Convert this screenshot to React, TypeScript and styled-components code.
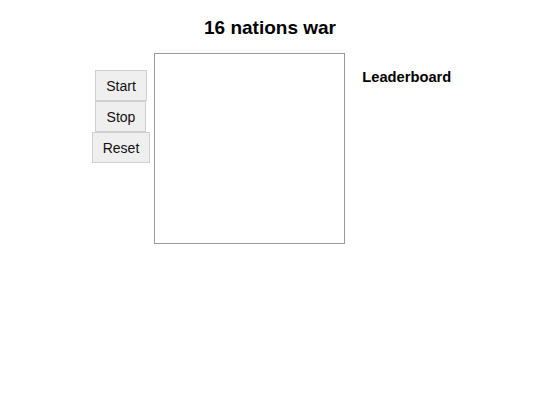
import React from "react";
import styled, { createGlobalStyle } from "styled-components";

const Global = createGlobalStyle`
  html, body { margin: 0; padding: 0; background: #ffffff; }
  body { font-family: "Liberation Sans", Arial, sans-serif; color: #000; }
`;

const Page = styled.div`
  display: flex;
  flex-direction: column;
  align-items: center;
`;

const Title = styled.h1`
  font-size: 19px;
  line-height: 23px;
  font-weight: bold;
  margin: 16px 0 14px;
`;

const Row = styled.div`
  display: flex;
  align-items: flex-start;
  justify-content: center;
  padding-right: 2px;
`;

const Controls = styled.div`
  display: flex;
  flex-direction: column;
  align-items: center;
  margin-top: 17px;
  margin-right: 4px;
`;

const Button = styled.button`
  font-family: "Liberation Sans", Arial, sans-serif;
  font-size: 14px;
  line-height: 16px;
  height: 31px;
  min-width: 51px;
  padding: 0 10px;
  color: #111;
  background: #efefef;
  border: 1px solid #cfcfcf;
  border-radius: 0;
  box-sizing: border-box;
`;

const Board = styled.div`
  width: 191px;
  height: 191px;
  box-sizing: border-box;
  border: 1px solid #9a9a9a;
  background: #fff;
`;

const Side = styled.div`
  margin-left: 17px;
  width: 84px;
  white-space: nowrap;
`;

const SideHeading = styled.h2`
  font-size: 14.7px;
  line-height: 18px;
  font-weight: bold;
  margin: 15px 0 0;
`;

export default function App() {
  return (
    <Page>
      <Global />
      <Title>16 nations war</Title>
      <Row>
        <Controls>
          <Button>Start</Button>
          <Button>Stop</Button>
          <Button>Reset</Button>
        </Controls>
        <Board />
        <Side>
          <SideHeading>Leaderboard</SideHeading>
        </Side>
      </Row>
    </Page>
  );
}
